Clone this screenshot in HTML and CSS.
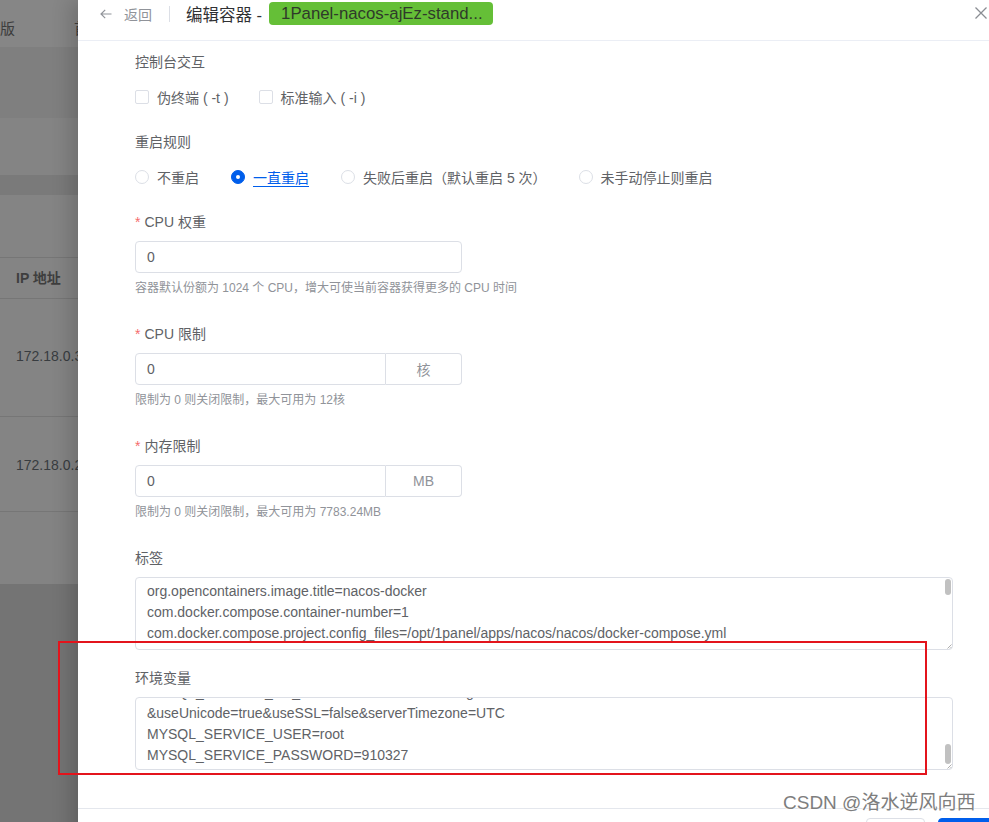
FILE: index.html
```html
<!DOCTYPE html>
<html lang="zh-CN">
<head>
<meta charset="utf-8">
<title>编辑容器</title>
<link rel="stylesheet" href="styles.css">
</head>
<body>
<div class="bg">
  <div class="bg-top"><span class="bg-t1">版</span><span class="bg-t2">首页</span></div>
  <div class="bg-band1"></div>
  <div class="bg-band2"></div>
  <div class="bg-gap"></div>
  <div class="bg-card">
    <div class="bg-search"></div>
    <div class="bg-th">IP 地址</div>
    <div class="bg-tr">172.18.0.3</div>
    <div class="bg-tr">172.18.0.2</div>
  </div>
  <div class="bg-band3"></div>
  <div class="bg-rest"></div>
</div>

<div class="drawer">
  <div class="dh">
    <div class="dh-row">
      <svg class="back-ic" viewBox="0 0 12 10" width="12" height="10"><path d="M11.5 5H1M5.2 0.8L1 5l4.2 4.2" fill="none" stroke="#909399" stroke-width="1.2"/></svg>
      <span class="back-tx">返回</span>
      <span class="dh-div"></span>
      <span class="dh-title">编辑容器 -</span>
      <span class="tag">1Panel-nacos-ajEz-stand...</span>
      <svg class="close" viewBox="0 0 12 12" width="12" height="12"><path d="M0.5 0.5l11 11M11.5 0.5l-11 11" stroke="#8a8d93" stroke-width="1.3"/></svg>
    </div>
  </div>

  <div class="db">
    <div class="item">
      <div class="lbl">控制台交互</div>
      <div class="row">
        <label class="chk"><span class="box"></span><span class="ctx">伪终端 ( -t )</span></label>
        <label class="chk"><span class="box"></span><span class="ctx">标准输入 ( -i )</span></label>
      </div>
    </div>

    <div class="item">
      <div class="lbl">重启规则</div>
      <div class="row row-rad">
        <label class="rad"><span class="dot"></span><span class="ctx">不重启</span></label>
        <label class="rad on"><span class="dot"></span><span class="ctx">一直重启</span></label>
        <label class="rad"><span class="dot"></span><span class="ctx">失败后重启（默认重启 5 次）</span></label>
        <label class="rad"><span class="dot"></span><span class="ctx">未手动停止则重启</span></label>
      </div>
    </div>

    <div class="item">
      <div class="lbl"><span class="req">*</span>CPU 权重</div>
      <div class="inp"><span class="val">0</span></div>
      <div class="help">容器默认份额为 1024 个 CPU，增大可使当前容器获得更多的 CPU 时间</div>
    </div>

    <div class="item">
      <div class="lbl"><span class="req">*</span>CPU 限制</div>
      <div class="grp"><div class="inp inp-l"><span class="val">0</span></div><div class="app">核</div></div>
      <div class="help">限制为 0 则关闭限制，最大可用为 12核</div>
    </div>

    <div class="item">
      <div class="lbl"><span class="req">*</span>内存限制</div>
      <div class="grp"><div class="inp inp-l"><span class="val">0</span></div><div class="app">MB</div></div>
      <div class="help">限制为 0 则关闭限制，最大可用为 7783.24MB</div>
    </div>

    <div class="item item-tag">
      <div class="lbl">标签</div>
      <div class="ta">
        <div class="ta-lines">org.opencontainers.image.title=nacos-docker
com.docker.compose.container-number=1
com.docker.compose.project.config_files=/opt/1panel/apps/nacos/nacos/docker-compose.yml</div>
        <span class="thumb thumb-top"></span>
        <svg class="rsz" viewBox="0 0 6 6" width="6" height="6"><path d="M5.5 1.5L1.5 5.5M5.5 4L4 5.5" stroke="#9a9a9a" stroke-width="0.8"/></svg>
      </div>
    </div>

    <div class="item">
      <div class="lbl">环境变量</div>
      <div class="ta ta-end">
        <div class="ta-lines">MYSQL_SERVICE_DB_PARAM=characterEncoding=utf8&amp;connectTimeout=1000&amp;socketTimeout=3000&amp;autoReconnect=true
&amp;useUnicode=true&amp;useSSL=false&amp;serverTimezone=UTC
MYSQL_SERVICE_USER=root
MYSQL_SERVICE_PASSWORD=910327</div>
        <span class="thumb thumb-bot"></span>
        <svg class="rsz" viewBox="0 0 6 6" width="6" height="6"><path d="M5.5 1.5L1.5 5.5M5.5 4L4 5.5" stroke="#9a9a9a" stroke-width="0.8"/></svg>
      </div>
    </div>
  </div>

  <div class="df">
    <button class="btn">取消</button>
    <button class="btn btn-p">确认</button>
  </div>
</div>

<div class="annot"></div>
<div class="wm">CSDN @洛水逆风向西</div>
</body>
</html>
```

FILE: styles.css
```css
* { box-sizing: border-box; }
html, body { margin: 0; padding: 0; }
body {
  width: 989px;
  height: 822px;
  overflow: hidden;
  position: relative;
  font-family: "Liberation Sans", "Noto Sans CJK SC", sans-serif;
  font-size: 14px;
  background: #757575;
}

/* background page (under mask) */
.bg { width: 989px; }
.bg-top {
  height: 47px;
  background: #868686;
  color: #3d3d3d;
  font-size: 15px;
  display: flex;
  align-items: center;
  padding-top: 7px;
  white-space: nowrap;
}
.bg-t1 { margin-left: 0; }
.bg-t2 { margin-left: 59px; }
.bg-band1 { height: 71px; background: #7f7f7f; }
.bg-band2 { height: 57px; background: #848484; }
.bg-gap { height: 20px; background: #7a7a7a; }
.bg-card { background: #848484; }
.bg-search { height: 63px; border-bottom: 1px solid #767676; }
.bg-th {
  height: 41px;
  line-height: 40px;
  padding-left: 16px;
  font-weight: bold;
  color: #3e3e3e;
  border-bottom: 1px solid #767676;
}
.bg-tr {
  height: 118px;
  line-height: 114px;
  padding-left: 16px;
  color: #383c40;
  border-bottom: 1px solid #767676;
}
.bg-tr + .bg-tr { height: 95px; line-height: 96px; }
.bg-band3 { height: 72px; background: #838383; }
.bg-rest { height: 240px; background: #747474; }

/* drawer */
.drawer {
  position: absolute;
  top: 0;
  left: 78px;
  width: 911px;
  height: 860px;
  background: #fff;
  display: flex;
  flex-direction: column;
  overflow: hidden;
  box-shadow: -8px 0 18px rgba(0, 0, 0, 0.16);
}
.dh {
  height: 41px;
  flex: none;
  border-bottom: 1px solid #ebeef5;
  padding: 2px 0 0 22px;
}
.dh-row {
  height: 23px;
  display: flex;
  align-items: center;
}
.back-ic { flex: none; }
.back-tx { margin-left: 12px; color: #909399; font-size: 14px; }
.dh-div { width: 1px; height: 16px; background: #dcdfe6; margin: 0 16px 0 17px; }
.dh-title { font-size: 16.5px; color: #303133; }
.tag {
  margin-left: 7px;
  background: #65bf37;
  color: #2f3a2a;
  height: 23px;
  line-height: 23px;
  padding: 0 10px 0 12px;
  border-radius: 4px;
  font-size: 16.8px;
}
.close { margin-left: auto; margin-right: 2px; margin-top: -2px; flex: none; }

.db {
  height: 767px;
  flex: none;
  padding: 10px 0 0 57px;
  overflow: hidden;
}
.item { margin-bottom: 18px; }
.item-tag { margin-bottom: 17px; }
.lbl { line-height: 22px; color: #606266; margin-bottom: 8px; }
.req { color: #f56c6c; margin-right: 4px; }

.row { height: 32px; display: flex; align-items: center; gap: 30px; }
.row-rad { gap: 32px; }
.chk, .rad { display: flex; align-items: center; color: #606266; }
.box {
  width: 14px; height: 14px;
  border: 1px solid #dcdfe6;
  border-radius: 2px;
  margin-right: 8px;
}
.dot {
  width: 14px; height: 14px;
  border: 1px solid #dcdfe6;
  border-radius: 50%;
  margin-right: 8px;
  position: relative;
}
.rad.on .dot { background: #005eeb; border-color: #005eeb; }
.rad.on .dot::after {
  content: "";
  position: absolute;
  left: 4px; top: 4px;
  width: 4px; height: 4px;
  border-radius: 50%;
  background: #fff;
}
.rad.on .ctx {
  color: #005eeb;
  text-decoration: underline;
  text-underline-offset: 3px;
}

.inp {
  width: 327px;
  height: 32px;
  border: 1px solid #dcdfe6;
  border-radius: 4px;
  padding: 0 11px;
  display: flex;
  align-items: center;
  color: #606266;
}
.grp { display: flex; width: 327px; }
.inp-l { width: 251px; border-radius: 4px 0 0 4px; }
.app {
  width: 76px;
  height: 32px;
  border: 1px solid #dcdfe6;
  border-left: 0;
  border-radius: 0 4px 4px 0;
  display: flex;
  align-items: center;
  justify-content: center;
  color: #909399;
}
.help {
  font-size: 12px;
  line-height: 20px;
  padding: 5px 0 7px;
  color: #909399;
}

.ta {
  position: relative;
  width: 818px;
  height: 73px;
  border: 1px solid #dcdfe6;
  border-radius: 4px;
  padding: 3px 11px 0;
  overflow: hidden;
  color: #606266;
  line-height: 21px;
}
.ta-lines { white-space: pre; }
.ta-end {
  display: flex;
  flex-direction: column;
  justify-content: flex-end;
  padding: 0 11px 3px;
  height: 73px;
}
.thumb {
  position: absolute;
  right: 1px;
  width: 6px;
  background: #c1c1c1;
  border-radius: 3px;
}
.thumb-top { top: 1px; height: 16px; }
.thumb-bot { bottom: 5px; height: 20px; }
.rsz { position: absolute; right: 0; bottom: 0; }

.df {
  flex: none;
  height: 52px;
  border-top: 1px solid #e4e7ed;
  padding-top: 9px;
  display: flex;
  justify-content: flex-end;
  align-items: flex-start;
}
.btn {
  height: 32px;
  width: 59px;
  border: 1px solid #dcdfe6;
  border-radius: 4px;
  background: #fff;
  color: #606266;
  font: 14px "Liberation Sans", "Noto Sans CJK SC", sans-serif;
}
.btn-p {
  width: 64px;
  margin-left: 13px;
  margin-right: -13px;
  background: #005eeb;
  border-color: #005eeb;
  color: #fff;
}

.annot {
  position: absolute;
  left: 58px;
  top: 641px;
  width: 869px;
  height: 134px;
  border: 2px solid #e3141c;
}
.wm {
  position: absolute;
  left: 783px;
  top: 790px;
  font-size: 19px;
  line-height: 26px;
  color: #7e7e7e;
  white-space: nowrap;
  text-shadow: 0 0 2px #fff, 0 0 2px #fff;
}
```
